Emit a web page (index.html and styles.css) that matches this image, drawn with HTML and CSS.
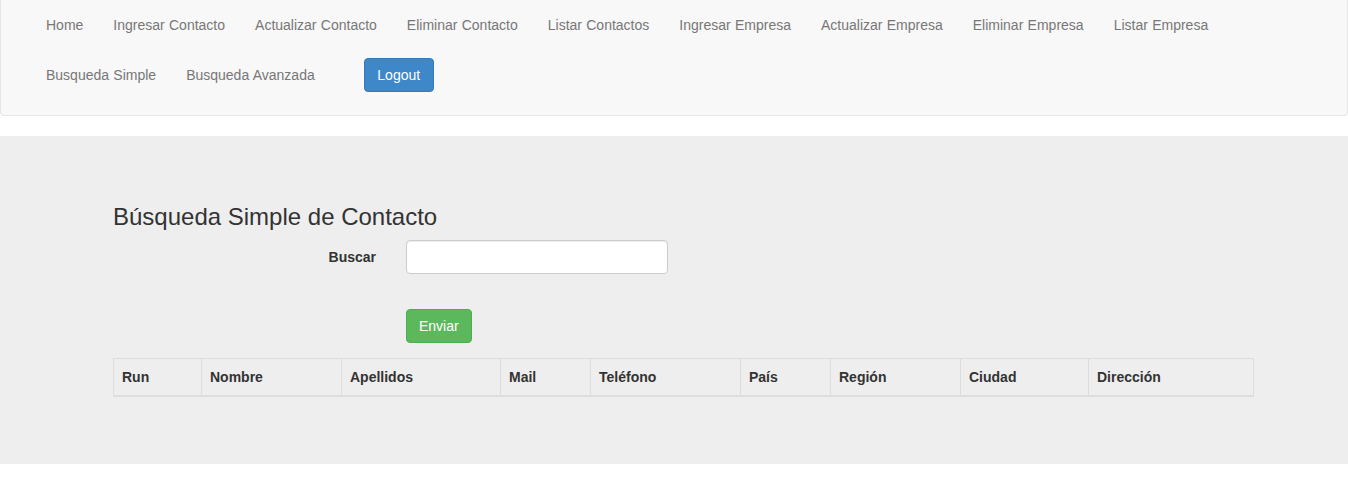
FILE: index.html
```html
<!DOCTYPE html>
<html lang="es">
<head>
<meta charset="utf-8">
<title>Búsqueda Simple de Contacto</title>
<link rel="stylesheet" href="styles.css">
</head>
<body>
<nav class="navbar">
  <ul class="nav">
    <li><a href="#">Home</a></li>
    <li><a href="#">Ingresar Contacto</a></li>
    <li><a href="#">Actualizar Contacto</a></li>
    <li><a href="#">Eliminar Contacto</a></li>
    <li><a href="#">Listar Contactos</a></li>
    <li><a href="#">Ingresar Empresa</a></li>
    <li><a href="#">Actualizar Empresa</a></li>
    <li><a href="#">Eliminar Empresa</a></li>
    <li><a href="#">Listar Empresa</a></li>
    <li><a href="#">Busqueda Simple</a></li>
    <li><a href="#">Busqueda Avanzada</a></li>
    <li class="nav-form"><button class="btn btn-primary" type="button">Logout</button></li>
  </ul>
</nav>
<section class="jumbotron">
  <div class="container">
    <h3 class="title">Búsqueda Simple de Contacto</h3>
    <form class="search-form">
      <div class="form-row">
        <label class="form-label" for="buscar">Buscar</label>
        <input class="form-input" id="buscar" type="text">
      </div>
      <div class="form-row form-actions">
        <button class="btn btn-success" type="button">Enviar</button>
      </div>
    </form>
    <table class="data-table">
      <colgroup>
        <col class="c-run"><col class="c-nombre"><col class="c-apellidos"><col class="c-mail"><col class="c-telefono"><col class="c-pais"><col class="c-region"><col class="c-ciudad"><col class="c-direccion">
      </colgroup>
      <thead>
        <tr>
          <th>Run</th><th>Nombre</th><th>Apellidos</th><th>Mail</th><th>Teléfono</th><th>País</th><th>Región</th><th>Ciudad</th><th>Dirección</th>
        </tr>
      </thead>
    </table>
  </div>
</section>
</body>
</html>
```
FILE: styles.css
```css
* { box-sizing: border-box; }
html, body { margin: 0; padding: 0; }
body {
  font-family: "Liberation Sans", Arial, Helvetica, sans-serif;
  font-size: 14px;
  line-height: 1.42857143;
  color: #333;
  background: #fff;
}

.navbar {
  background: #f8f8f8;
  border: 1px solid #e7e7e7;
  border-top-width: 0;
  border-radius: 0 0 4px 4px;
  padding: 0 30px 15px 30px;
  margin-bottom: 20px;
}
.nav {
  list-style: none;
  margin: 0;
  padding: 0;
  display: flex;
  flex-wrap: wrap;
}
.nav li { display: block; }
.nav a {
  display: block;
  padding: 15px;
  line-height: 20px;
  color: #777;
  text-decoration: none;
  word-spacing: 0.4px;
}
.nav-form {
  margin-left: 34px;
  padding: 8px 0;
}

.btn {
  display: inline-block;
  font-family: inherit;
  font-size: 14px;
  line-height: 1.42857143;
  padding: 6px 12px;
  border: 1px solid transparent;
  border-radius: 4px;
  color: #fff;
  cursor: pointer;
  height: 34px;
}
.btn-primary { background: #3e87c9; border-color: #357ab8; padding: 6px 12px; width: 70px; }
.btn-success { background: #5cb85c; border-color: #4cae4c; }

.jumbotron {
  background: #eee;
  padding: 48px 0 47px;
}
.container {
  width: 1140px;
  margin-left: calc(50% - 561px);
}
.title {
  font-size: 24px;
  font-weight: 500;
  line-height: 1.1;
  margin: 20px 0 10px;
  color: #333;
}

.form-row {
  display: flex;
  align-items: flex-start;
  margin-bottom: 35px;
}
.form-label {
  width: 263px;
  text-align: right;
  font-weight: bold;
  padding-top: 7px;
  margin-right: 30px;
}
.form-input {
  width: 262px;
  height: 34px;
  padding: 6px 12px;
  font-size: 14px;
  font-family: inherit;
  background: #fff;
  border: 1px solid #ccc;
  border-radius: 4px;
  box-shadow: inset 0 1px 1px rgba(0,0,0,.075);
}
.form-actions {
  padding-left: 293px;
  margin-bottom: 15px;
}

.data-table {
  width: 1140px;
  table-layout: fixed;
  border-collapse: collapse;
  border: 1px solid #ddd;
  margin-bottom: 20px;
}
.data-table th {
  text-align: left;
  font-weight: bold;
  padding: 8px;
  line-height: 20px;
  border: 1px solid #ddd;
  border-bottom-width: 2px;
  vertical-align: bottom;
}
.c-run { width: 88px; }
.c-nombre { width: 140px; }
.c-apellidos { width: 159px; }
.c-mail { width: 90px; }
.c-telefono { width: 150px; }
.c-pais { width: 90px; }
.c-region { width: 130px; }
.c-ciudad { width: 128px; }
.c-direccion { width: 165px; }
```
